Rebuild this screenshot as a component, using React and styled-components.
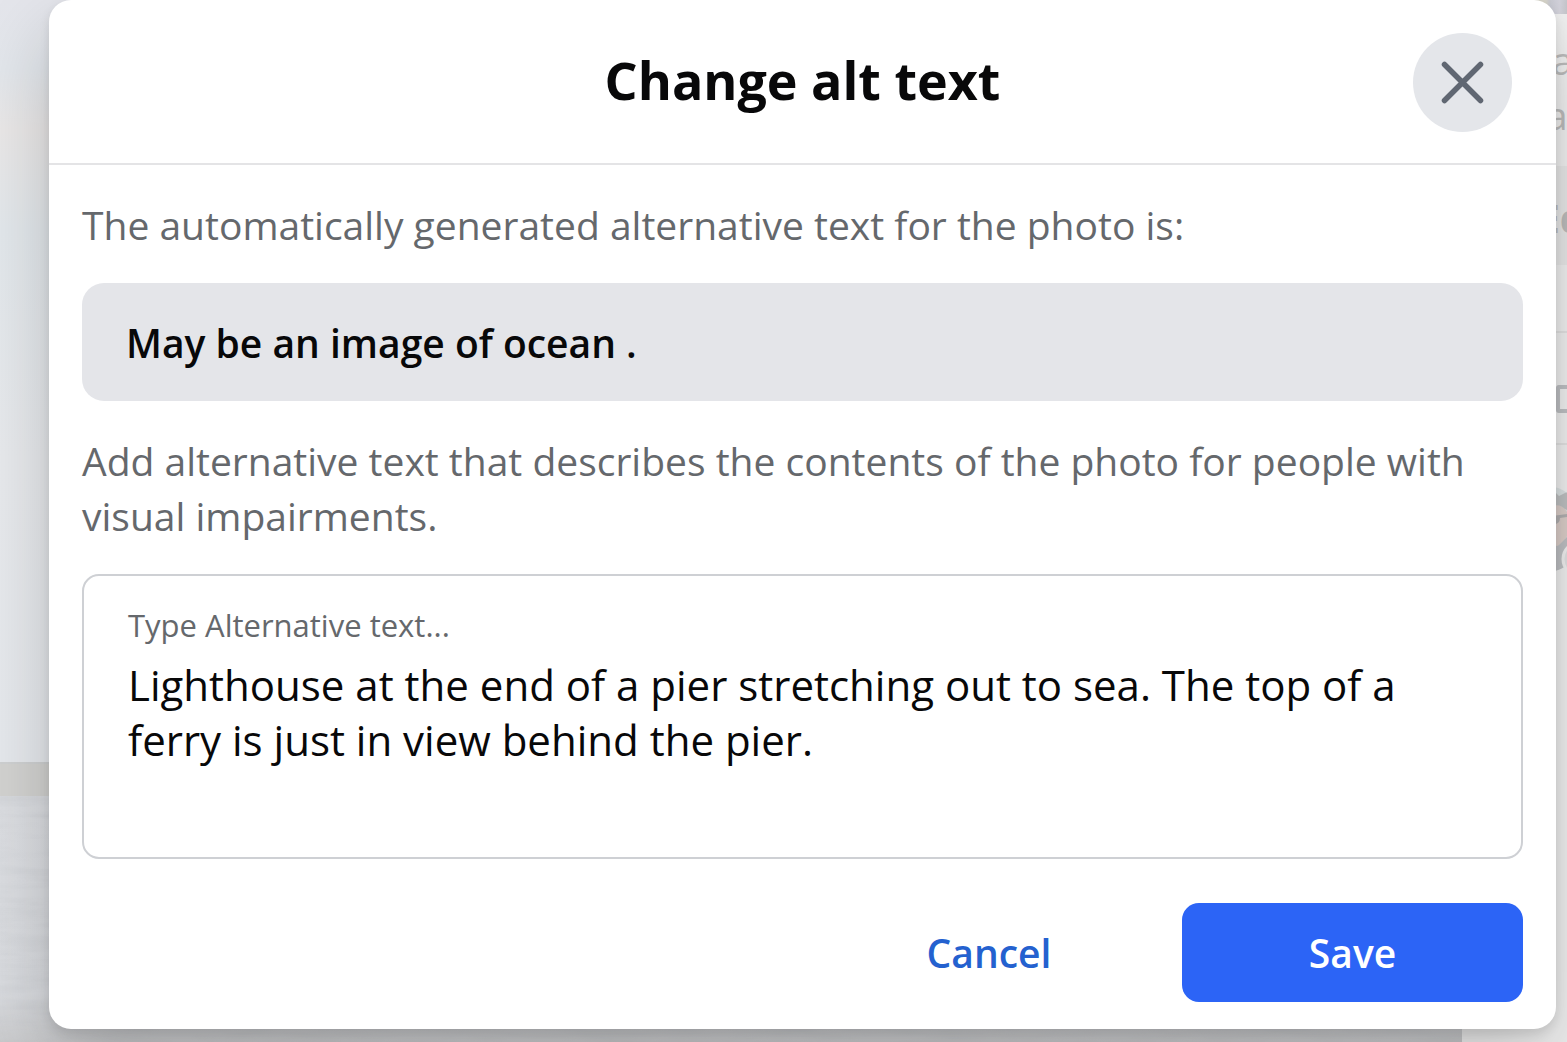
import React, {useState} from 'react';
import styled, {createGlobalStyle} from 'styled-components';

const GlobalStyle = createGlobalStyle`
  *, *::before, *::after {
    box-sizing: border-box;
  }

  body {
    margin: 0;
    background: #f0f0f0;
    color: #080809;
    font-family: 'Open Sans', 'Noto Sans', sans-serif;
  }

  button, textarea {
    font-family: inherit;
  }
`;

const Page = styled.div`
  display: grid;
  grid-template-columns: minmax(0, 1fr);
  min-height: 100vh;
  overflow: hidden;

  > * {
    grid-area: 1 / 1;
  }
`;

const Viewer = styled.div`
  display: grid;
  grid-template-columns: minmax(0, 1fr) 105px;
`;

const Photo = styled.div`
  display: grid;
  grid-template-rows: 762fr 34fr 246fr;
`;

const Sky = styled.div`
  background: linear-gradient(180deg, #e4e5eb 0%, #e3e7ec 9%, #eae8e8 17%, #e3e8ec 30%, #e8eaed 60%, #e6e9ed 100%);
`;

const Pier = styled.div`
  background: #d3d3d1;
  border-top: 2px solid #cfd1d2;
`;

const Water = styled.svg`
  display: block;
  width: 100%;
  height: 100%;
  background: linear-gradient(180deg, #dcdee2, #dadce0 80%, #cbccce);
`;

const Sidebar = styled.div`
  overflow: hidden;
  background: #f1f1f1;
  color: #bdbdbd;
  font-size: 39px;
  line-height: 55px;
`;

const SidebarPhoto = styled.div`
  height: 14px;
  background: linear-gradient(90deg, #d8d6cb 80%, #c9cad3 84%, #d4d3dc 93%, #c6c7cc);
`;

const SidebarText = styled.div`
  padding: 18px 0 24px;
`;

const SidebarLine = styled.div`
  padding-left: ${({$indent}) => $indent}px;
`;

const SidebarRow = styled.div`
  height: ${({$height}) => $height}px;
  padding: 24px 0 0 76px;
  background: ${({$shaded}) => ($shaded ? '#e9e9e9' : 'transparent')};
  border-bottom: ${({$line}) => ($line ? '2px solid #e3e3e3' : 'none')};
  font-weight: 700;
`;

const SidebarIcon = styled.svg`
  display: block;
  margin-top: 27px;
`;

const Avatar = styled.svg`
  display: block;
  margin: 40px 0 0 48px;
`;

const Dialog = styled.form`
  align-self: start;
  z-index: 1;
  margin: 0 11px 13px 49px;
  background: #fff;
  border-radius: 22px;
  box-shadow: 0 33px 77px rgba(0, 0, 0, 0.2), 0 5px 11px rgba(0, 0, 0, 0.1);
`;

const Header = styled.header`
  display: grid;
  grid-template-columns: 99px 1fr 99px;
  align-items: center;
  padding: 33px 44px 31px;
  border-bottom: 2px solid #e4e4e6;
`;

const Title = styled.h1`
  grid-column: 2;
  margin: 0;
  padding-bottom: 6px;
  font-size: 52px;
  font-weight: 700;
  line-height: 66px;
  text-align: center;
`;

const CloseButton = styled.button`
  display: grid;
  place-items: center;
  width: 99px;
  height: 99px;
  padding: 0;
  border: 0;
  border-radius: 50%;
  background: #e4e6ea;
  color: #606772;
  cursor: pointer;
`;

const Body = styled.div`
  padding: 32px 33px 33px;
`;

const Hint = styled.p`
  margin: 0;
  color: #65686c;
  font-size: 39px;
  line-height: 55px;
`;

const Generated = styled.div`
  margin: 31px 0 32px;
  padding: 32px 44px 31px;
  border-radius: 22px;
  background: #e4e5e9;
  font-size: 39px;
  font-weight: 600;
  line-height: 55px;
`;

const Field = styled.div`
  margin-top: 31px;
  padding: 27px 44px 22px;
  border: 2px solid #ced0d4;
  border-radius: 17px;
`;

const Label = styled.label`
  display: block;
  color: #65686c;
  font-size: 31px;
  line-height: 44px;
`;

const TextArea = styled.textarea`
  display: block;
  width: 100%;
  height: 178px;
  margin: 10px 0 0;
  padding: 0;
  border: 0;
  outline: 0;
  resize: none;
  background: transparent;
  color: #080809;
  font-size: 42px;
  line-height: 55px;
`;

const Footer = styled.footer`
  display: flex;
  justify-content: flex-end;
  gap: 66px;
  padding: 11px 33px 27px;
`;

const Button = styled.button`
  min-width: ${({$primary}) => ($primary ? '341px' : '254px')};
  height: 99px;
  padding: 0 44px;
  border: 0;
  border-radius: 17px;
  background: ${({$primary}) => ($primary ? '#2c64f6' : 'transparent')};
  color: ${({$primary}) => ($primary ? '#fff' : '#2461cf')};
  font-size: 39px;
  font-weight: 600;
  cursor: pointer;
`;

function PhotoViewer() {
  return (
    <Viewer aria-hidden="true">
      <Photo>
        <Sky />
        <Pier />
        <Water>
          <filter id="waves" x="0" y="0" width="100%" height="100%">
            <feTurbulence type="fractalNoise" baseFrequency="0.012 0.09" numOctaves="4" seed="4" />
            <feColorMatrix values="0 0 0 0 0.45  0 0 0 0 0.47  0 0 0 0 0.5  2 0 0 0 -0.8" />
          </filter>
          <rect width="100%" height="100%" filter="url(#waves)" opacity="0.2" />
        </Water>
      </Photo>
      <Sidebar>
        <SidebarPhoto />
        <SidebarText>
          <SidebarLine $indent={90}>a</SidebarLine>
          <SidebarLine $indent={84}>a</SidebarLine>
        </SidebarText>
        <SidebarRow $height={99} $shaded>Ed</SidebarRow>
        <SidebarRow $height={68} $line />
        <SidebarRow $height={112} $line>
          <SidebarIcon width="31" height="30" viewBox="0 0 31 30" fill="none" stroke="#bfc1c4" strokeWidth="4">
            <rect x="20" y="3" width="40" height="24" rx="1" />
          </SidebarIcon>
        </SidebarRow>
        <Avatar width="57" height="88" viewBox="0 0 57 88">
          <defs>
            <clipPath id="face"><circle cx="32" cy="44" r="44" /></clipPath>
          </defs>
          <g clipPath="url(#face)">
            <rect width="57" height="88" fill="#dde3e4" />
            <path d="M42 10l4-2 3 3 8-4v18l-9-4-6 2z" fill="#bfc1c2" />
            <path d="M42 21q10-3 15 6v24q-5 10-10 11l-5-2z" fill="#dccfca" />
            <path d="M42 31l15-2v3l-7 1q0 7-8 6z" fill="#b3b1b2" />
            <path d="M42 56q4 8 8 3l7-7v36H42z" fill="#bfc1c4" />
          </g>
          <circle cx="70" cy="74" r="17" fill="#e2e2e3" stroke="#f1f1f1" strokeWidth="3" />
        </Avatar>
      </Sidebar>
    </Viewer>
  );
}

function App() {
  const [altText, setAltText] = useState(
    'Lighthouse at the end of a pier stretching out to sea. The top of a ferry is just in view behind the pier.'
  );

  const onSubmit = (event) => {
    event.preventDefault();
  };

  return (
    <>
      <GlobalStyle />
      <Page>
        <PhotoViewer />
        <Dialog role="dialog" aria-labelledby="dialog-title" onSubmit={onSubmit}>
          <Header>
            <Title id="dialog-title">Change alt text</Title>
            <CloseButton type="button" aria-label="Close">
              <svg width="43" height="43" viewBox="0 0 43 43" fill="none" stroke="currentColor" strokeWidth="5.5" strokeLinecap="round">
                <path d="M3.5 3.5l36 36M39.5 3.5l-36 36" />
              </svg>
            </CloseButton>
          </Header>
          <Body>
            <Hint>The automatically generated alternative text for the photo is:</Hint>
            <Generated>May be an image of ocean .</Generated>
            <Hint>
              Add alternative text that describes the contents of the photo for people with visual impairments.
            </Hint>
            <Field>
              <Label htmlFor="alt-text">Type Alternative text...</Label>
              <TextArea id="alt-text" value={altText} onChange={(event) => setAltText(event.target.value)} />
            </Field>
          </Body>
          <Footer>
            <Button type="button">Cancel</Button>
            <Button type="submit" $primary>Save</Button>
          </Footer>
        </Dialog>
      </Page>
    </>
  );
}

export default App;
